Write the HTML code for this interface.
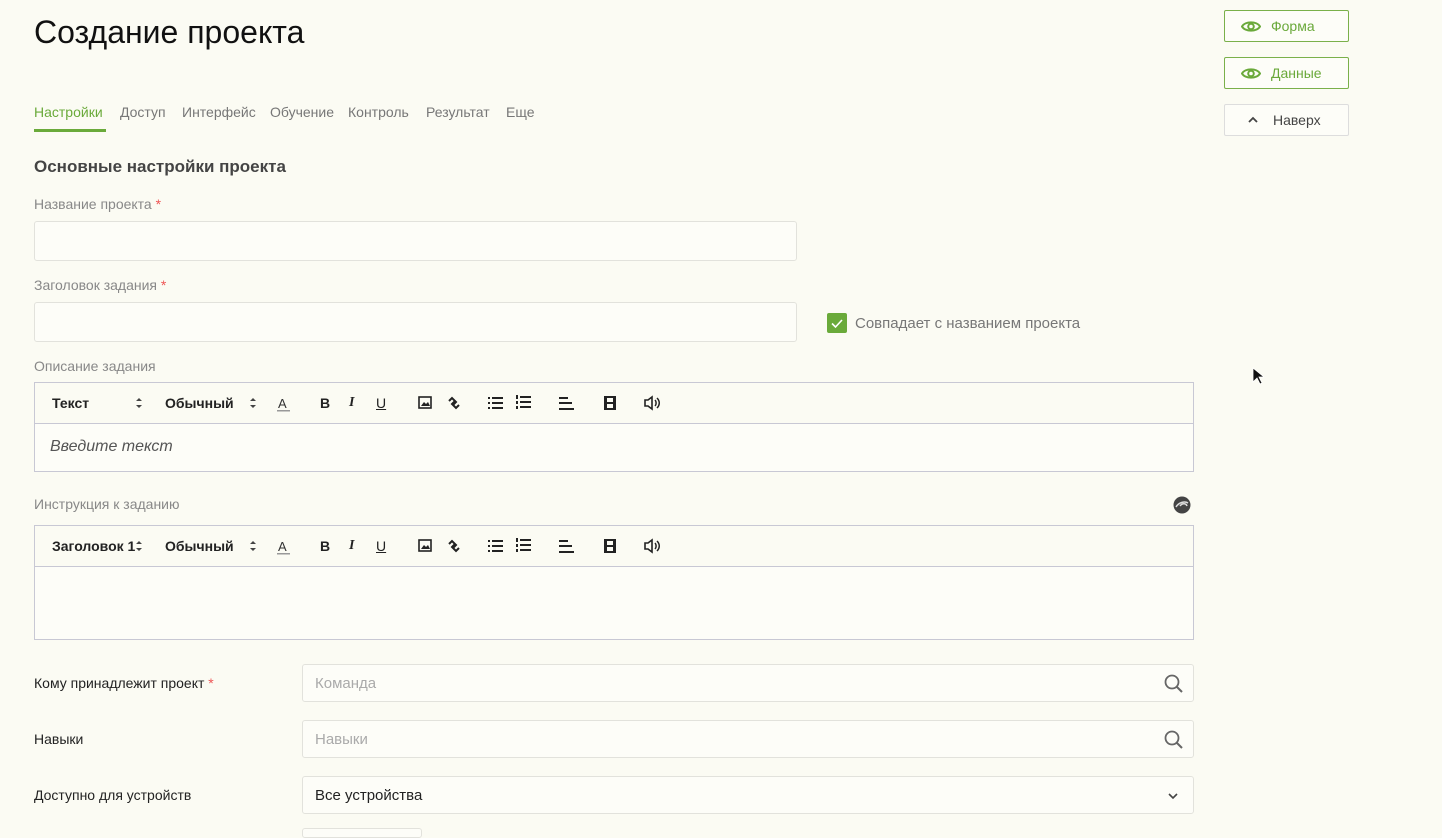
<!DOCTYPE html>
<html><head><meta charset="utf-8"><style>
*{box-sizing:border-box;margin:0;padding:0}
body{width:1442px;height:832px;overflow:hidden;background:#fbfbf3;font-family:"Liberation Sans",sans-serif;position:relative;color:#333}
.a{position:absolute;white-space:nowrap}
h1{position:absolute;left:34px;top:14px;font-size:32px;font-weight:normal;color:#111}
.tab{font-size:14px;color:#777;top:104px}
.lbl{font-size:14px;color:#888}
.req{color:#e55}
.inp{position:absolute;border:1px solid #e2e2dc;border-radius:3px;background:#fdfdf8}
.ed{position:absolute;left:34px;width:1160px;border:1px solid #c8c8d4;background:#fdfdf8}
.tb{height:41px;border-bottom:1px solid #c8c8d4;position:relative;background:#fbfbf3}
.tb span{position:absolute;top:12px;font-size:14px;color:#222;font-weight:bold}
.tb svg{position:absolute;top:12px}
.btn{position:absolute;left:1224px;width:125px;height:32px;border:1px solid #7ab04a;border-radius:2px;color:#6aa93a;font-size:14px;background:#fdfdf8}
.btn span{position:absolute;left:46px;top:7px}
.row{font-size:14px;color:#222}
</style></head><body>
<h1>Создание проекта</h1>
<div class="a tab" style="left:34px;color:#6aaa3a">Настройки</div>
<div style="position:absolute;left:34px;top:129px;width:72px;height:3px;background:#6aaa3a"></div>
<div class="a tab" style="left:120px">Доступ</div>
<div class="a tab" style="left:182px">Интерфейс</div>
<div class="a tab" style="left:270px">Обучение</div>
<div class="a tab" style="left:348px">Контроль</div>
<div class="a tab" style="left:426px">Результат</div>
<div class="a tab" style="left:506px">Еще</div>
<div class="a" style="left:34px;top:157px;font-size:17px;font-weight:bold;color:#444">Основные настройки проекта</div>
<div class="a lbl" style="left:34px;top:196px">Название проекта <span class="req">*</span></div>
<div class="inp" style="left:34px;top:221px;width:763px;height:40px"></div>
<div class="a lbl" style="left:34px;top:277px">Заголовок задания <span class="req">*</span></div>
<div class="inp" style="left:34px;top:302px;width:763px;height:40px"></div>
<div style="position:absolute;left:827px;top:313px;width:20px;height:20px;background:#6aaa3a;border-radius:2px"><svg width="20" height="20"><path d="M5 10.5l3.5 3.5L15 7" stroke="#fff" stroke-width="1.6" fill="none"/></svg></div>
<div class="a" style="left:855px;top:315px;font-size:15px;color:#777">Совпадает с названием проекта</div>
<div class="a lbl" style="left:34px;top:358px">Описание задания</div>

<div class="ed" style="top:382px;height:90px">
<div class="tb" id="tb1"></div>
<div class="a" style="left:15px;top:55px;font-size:16px;font-style:italic;color:#555">Введите текст</div>
</div>
<div class="a lbl" style="left:34px;top:496px">Инструкция к заданию</div>
<svg class="a" style="left:1172px;top:495px" width="20" height="20"><circle cx="10" cy="10" r="8.5" fill="#444"/><path d="M4 12c3-5 9-6 12-4M8 11c2-3 6-3 7 0" stroke="#ddd" stroke-width="1.5" fill="none"/></svg>
<div class="ed" style="top:525px;height:115px"><div class="tb" id="tb2"></div></div>

<div class="a row" style="left:34px;top:675px">Кому принадлежит проект <span class="req">*</span></div>
<div class="inp" style="left:302px;top:664px;width:892px;height:38px"><div class="a" style="left:12px;top:10px;font-size:15px;color:#aaa">Команда</div><svg class="a" style="left:860px;top:8px" width="22" height="22"><circle cx="9" cy="9" r="6.5" stroke="#666" stroke-width="1.8" fill="none"/><path d="M14 14l5 5" stroke="#666" stroke-width="2"/></svg></div>
<div class="a row" style="left:34px;top:731px">Навыки</div>
<div class="inp" style="left:302px;top:720px;width:892px;height:38px"><div class="a" style="left:12px;top:10px;font-size:15px;color:#aaa">Навыки</div><svg class="a" style="left:860px;top:8px" width="22" height="22"><circle cx="9" cy="9" r="6.5" stroke="#666" stroke-width="1.8" fill="none"/><path d="M14 14l5 5" stroke="#666" stroke-width="2"/></svg></div>
<div class="a row" style="left:34px;top:787px">Доступно для устройств</div>
<div class="inp" style="left:302px;top:776px;width:892px;height:38px"><div class="a" style="left:12px;top:10px;font-size:15px;color:#222">Все устройства</div><svg class="a" style="left:864px;top:14px" width="12" height="10"><path d="M2 3l4 4 4-4" stroke="#444" stroke-width="1.6" fill="none"/></svg></div>
<div class="inp" style="left:302px;top:828px;width:120px;height:10px"></div>

<div class="btn" style="top:10px"><svg class="a" style="left:16px;top:9px" width="20" height="13"><path d="M1 6.5C4 1 16 1 19 6.5 16 12 4 12 1 6.5z" stroke="#6aa93a" stroke-width="2" fill="none"/><circle cx="10" cy="6.5" r="2.8" stroke="#6aa93a" stroke-width="2" fill="none"/></svg><span>Форма</span></div>
<div class="btn" style="top:57px"><svg class="a" style="left:16px;top:9px" width="20" height="13"><path d="M1 6.5C4 1 16 1 19 6.5 16 12 4 12 1 6.5z" stroke="#6aa93a" stroke-width="2" fill="none"/><circle cx="10" cy="6.5" r="2.8" stroke="#6aa93a" stroke-width="2" fill="none"/></svg><span>Данные</span></div>
<div class="btn" style="top:104px;border-color:#ddd;color:#444"><svg class="a" style="left:22px;top:10px" width="12" height="10"><path d="M2 7l4-4 4 4" stroke="#444" stroke-width="1.8" fill="none"/></svg><span style="left:48px">Наверх</span></div>
<svg class="a" style="left:1252px;top:367px" width="12" height="18"><path d="M1 1v14l4-4 3 6 2-1-3-6h5z" fill="#111" stroke="#fff" stroke-width=".8"/></svg>
<script>
function tb(first){return `<span style="left:17px">${first}</span>
<svg style="left:100px" width="8" height="16"><path d="M1 6l3-3 3 3zM1 10l3 3 3-3z" fill="#444"/></svg>
<span style="left:130px">Обычный</span>
<svg style="left:214px" width="8" height="16"><path d="M1 6l3-3 3 3zM1 10l3 3 3-3z" fill="#444"/></svg>
<svg style="left:242px" width="14" height="18"><text x="1" y="13" font-size="13" font-family="Liberation Sans" fill="#333">A</text><rect x="0" y="15" width="13" height="1.5" fill="#999"/></svg>
<span style="left:285px">B</span><span style="left:314px;font-style:italic;font-family:'Liberation Serif'">I</span><span style="left:341px;text-decoration:underline;font-weight:normal">U</span>
<svg style="left:383px;top:13px" width="14" height="14"><rect x="1" y="1" width="12" height="11" stroke="#222" stroke-width="1.6" fill="none"/><path d="M3 10l3-4 2 2 2-2 2 4z" fill="#222"/></svg>
<svg style="left:411px;top:12px" width="16" height="16"><path d="M3 6l3-3 4 4-3 3M13 10l-3 3-4-4 3-3" stroke="#222" stroke-width="2" fill="none"/></svg>
<svg style="left:453px;top:13px" width="16" height="14"><g fill="#222"><rect x="0" y="1" width="2" height="2"/><rect x="0" y="6" width="2" height="2"/><rect x="0" y="11" width="2" height="2"/><rect x="4" y="1" width="11" height="2"/><rect x="4" y="6" width="11" height="2"/><rect x="4" y="11" width="11" height="2"/></g></svg>
<svg style="left:481px;top:12px" width="16" height="15"><g fill="#222"><rect x="0" y="0" width="2" height="4"/><rect x="0" y="6" width="2" height="3"/><rect x="0" y="11" width="2" height="3"/><rect x="4" y="1" width="11" height="2"/><rect x="4" y="6" width="11" height="2"/><rect x="4" y="11" width="11" height="2"/></g></svg>
<svg style="left:524px;top:13px" width="16" height="16"><g fill="#222"><rect x="0" y="1" width="9" height="2"/><rect x="0" y="6" width="13" height="2"/><rect x="0" y="12" width="15" height="2"/></g></svg>
<svg style="left:568px;top:12px" width="14" height="16"><rect x="1" y="1" width="12" height="14" fill="#222"/><rect x="4" y="3" width="6" height="4" fill="#fbfbf3"/><rect x="4" y="9" width="6" height="4" fill="#fbfbf3"/></svg>
<svg style="left:608px;top:12px" width="18" height="16"><path d="M2 5h3l4-3v12l-4-3H2z" stroke="#222" stroke-width="1.6" fill="none"/><path d="M12 5c1.5 1.5 1.5 4.5 0 6M14 3c3 3 3 7 0 10" stroke="#222" stroke-width="1.5" fill="none"/></svg>`}
document.getElementById('tb1').innerHTML=tb('Текст');
document.getElementById('tb2').innerHTML=tb('Заголовок 1');
</script>
</body></html>
